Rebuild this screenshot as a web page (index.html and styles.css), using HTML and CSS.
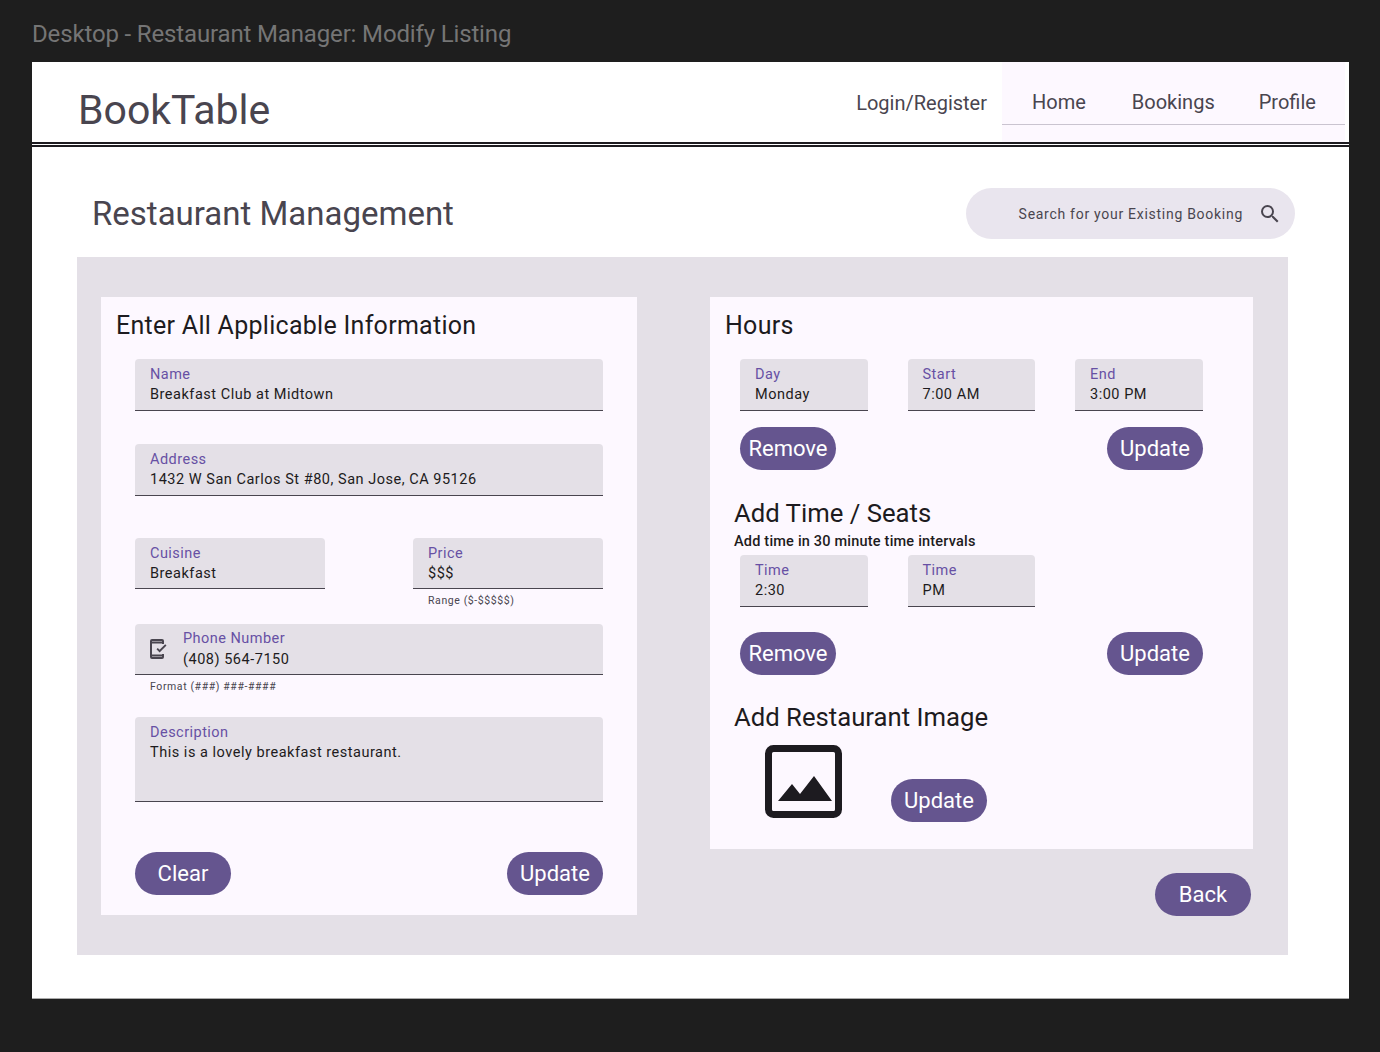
FILE: index.html
```html
<!DOCTYPE html>
<html lang="en">
<head>
    <meta charset="UTF-8">
    <meta name="viewport" content="width=device-width, initial-scale=1.0">
    <title>Restaurant Manager: Modify Listing</title>
    <link rel="stylesheet" href="styles.css">
</head>
<body>
    <div class="frame-label">Desktop - Restaurant Manager: Modify Listing</div>
    <div class="frame">
        <header class="topbar">
            <div class="brand">BookTable</div>
            <a class="login">Login/Register</a>
            <nav class="tabs">
                <div class="tab-row">
                    <a>Home</a>
                    <a>Bookings</a>
                    <a>Profile</a>
                </div>
            </nav>
        </header>

        <main class="content">
            <div class="title-row">
                <h1>Restaurant Management</h1>
                <div class="search">
                    <span>Search for your Existing Booking</span>
                    <svg width="24" height="24" viewBox="0 0 24 24"><path fill="#49454f" d="M15.5 14h-.79l-.28-.27A6.47 6.47 0 0 0 16 9.5 6.5 6.5 0 1 0 9.5 16c1.61 0 3.09-.59 4.23-1.57l.27.28v.79l5 4.99L20.49 19l-4.99-5zm-6 0C7.01 14 5 11.99 5 9.5S7.01 5 9.5 5 14 7.01 14 9.5 11.99 14 9.5 14z"/></svg>
                </div>
            </div>

            <section class="panel">
                <form class="card card-left">
                    <h2>Enter All Applicable Information</h2>
                    <div class="field field-name">
                        <label>Name</label>
                        <div class="value">Breakfast Club at Midtown</div>
                    </div>
                    <div class="field field-address">
                        <label>Address</label>
                        <div class="value">1432 W San Carlos St #80, San Jose, CA 95126</div>
                    </div>
                    <div class="pair">
                        <div class="field field-half field-short">
                            <label>Cuisine</label>
                            <div class="value">Breakfast</div>
                        </div>
                        <div class="field-half">
                            <div class="field field-short">
                                <label>Price</label>
                                <div class="value">$$$</div>
                            </div>
                            <div class="helper">Range ($-$$$$$)</div>
                        </div>
                    </div>
                    <div class="field field-short field-icon">
                        <svg width="24" height="24" viewBox="0 0 24 24"><path fill="#49454f" d="M5 2h10a2 2 0 0 1 2 2v3h-2V6.500H5v11h10V17h2v3a2 2 0 0 1-2 2H5a2 2 0 0 1-2-2V4a2 2 0 0 1 2-2zm0 2v.5h10V4zm0 15.500v.5h10v-.5z"/><path fill="#49454f" d="M12.600 15.400l-3.100-3.100 1.300-1.300 1.800 1.800 5.600-5.600 1.300 1.300z"/></svg>
                        <div>
                            <label>Phone Number</label>
                            <div class="value">(408) 564-7150</div>
                        </div>
                    </div>
                    <div class="helper">Format (###) ###-####</div>
                    <div class="field field-desc">
                        <label>Description</label>
                        <div class="value">This is a lovely breakfast restaurant.</div>
                    </div>
                    <div class="actions actions-form">
                        <button type="button">Clear</button>
                        <button type="button">Update</button>
                    </div>
                </form>

                <div class="side">
                    <div class="card card-right">
                        <h2>Hours</h2>
                        <div class="hours-row">
                            <div class="field"><label>Day</label><div class="value">Monday</div></div>
                            <div class="field"><label>Start</label><div class="value">7:00 AM</div></div>
                            <div class="field"><label>End</label><div class="value">3:00 PM</div></div>
                        </div>
                        <div class="actions actions-hours">
                            <button type="button">Remove</button>
                            <button type="button">Update</button>
                        </div>

                        <h3 class="add-time">Add Time / Seats</h3>
                        <p class="note">Add time in 30 minute time intervals</p>
                        <div class="hours-row">
                            <div class="field"><label>Time</label><div class="value">2:30</div></div>
                            <div class="field"><label>Time</label><div class="value">PM</div></div>
                        </div>
                        <div class="actions actions-seats">
                            <button type="button">Remove</button>
                            <button type="button">Update</button>
                        </div>

                        <h3 class="add-image">Add Restaurant Image</h3>
                        <div class="image-row">
                            <svg class="image-icon" width="77" height="73" viewBox="0 0 77 73">
                                <rect x="3.500" y="3.500" width="70" height="66" rx="5" fill="none" stroke="#1d1b20" stroke-width="7"/>
                                <path fill="#1d1b20" d="M13 56l14-17 8 10 14-18 18 25z"/>
                            </svg>
                            <button type="button">Update</button>
                        </div>
                    </div>
                    <button type="button" class="back">Back</button>
                </div>
            </section>
        </main>
    </div>
</body>
</html>
```
FILE: styles.css
```css
* {
    box-sizing: border-box;
}

body {
    margin: 0;
    background-color: #1e1e1e;
    font-family: 'Roboto', 'Liberation Sans', sans-serif;
    color: #1d1b20;
    height: 1052px;
    overflow: hidden;
}

h1, h2, h3, p {
    margin: 0;
    font-weight: 400;
}

.frame-label {
    height: 62px;
    padding: 20px 0 0 32px;
    font-size: 24px;
    line-height: 28px;
    letter-spacing: -0.15px;
    color: #757575;
}

.frame {
    width: 1317px;
    height: 937px;
    margin-left: 32px;
    background-color: #fff;
    border-bottom: 1px solid #aaa;
}

.topbar {
    display: flex;
    height: 85px;
    border-bottom: 5px double #1d1b20;
}

.brand {
    margin: 22px 0 0 46px;
    font-size: 41px;
    line-height: 52px;
    color: #49454f;
    flex: 1;
}

.login {
    margin-top: 28px;
    margin-right: 15px;
    font-size: 20px;
    line-height: 26px;
    color: #49454f;
}

.tabs {
    width: 343px;
    margin-right: 4px;
    background-color: #fdf8ff;
}

.tab-row {
    display: flex;
    height: 63px;
    padding: 27px 0 0 30px;
    border-bottom: 1px solid #cac4d0;
    font-size: 20px;
    line-height: 26px;
    color: #49454f;
}

.tab-row a:nth-child(2) {
    margin-left: 46px;
}

.tab-row a:nth-child(3) {
    margin-left: 44px;
}

.title-row {
    display: flex;
    justify-content: space-between;
    align-items: center;
    height: 51px;
    margin-top: 41px;
    padding: 0 54px 0 60px;
}

h1 {
    font-size: 33px;
    color: #49454f;
}

.search {
    display: flex;
    align-items: center;
    justify-content: flex-end;
    gap: 15px;
    width: 329px;
    height: 51px;
    padding-right: 13px;
    border-radius: 26px;
    background-color: #e9e5ee;
    font-size: 14px;
    letter-spacing: 0.72px;
    color: #49454f;
}

.panel {
    display: flex;
    align-items: flex-start;
    width: 1211px;
    height: 698px;
    margin: 18px 0 0 45px;
    padding: 40px 0 0 24px;
    background-color: #e4e0e7;
}

.card {
    background-color: #fdf8ff;
}

.card-left {
    width: 536px;
    height: 618px;
    padding: 15px 34px 0 34px;
}

.card h2 {
    font-size: 25px;
    line-height: 28px;
    letter-spacing: 0.28px;
    color: #1d1b20;
}

.card-left h2 {
    margin-left: -19px;
}

.field {
    height: 52px;
    padding: 7px 15px 0;
    border-radius: 4px 4px 0 0;
    background-color: #e4e0e7;
    border-bottom: 1px solid #49454f;
}

.field-short {
    height: 51px;
}

.field label {
    display: block;
    font-size: 14.500px;
    line-height: 18px;
    letter-spacing: 0.47px;
    color: #6750a4;
}

.value {
    font-size: 14.500px;
    line-height: 22px;
    letter-spacing: 0.52px;
    color: #1d1b20;
}

.field-name {
    margin-top: 19px;
}

.field-address {
    margin-top: 33px;
}

.pair {
    display: flex;
    justify-content: space-between;
    margin-top: 42px;
    height: 86px;
}

.field-half {
    width: 190px;
}

.helper {
    padding: 5px 15px 0;
    font-size: 10.500px;
    line-height: 14px;
    letter-spacing: 0.6px;
    color: #49454f;
}

.field-icon {
    display: flex;
    gap: 12px;
    padding-left: 12px;
    padding-top: 6px;
}

.field-icon svg {
    margin-top: 7px;
}

.field-icon .value {
    line-height: 24px;
}

.field-desc {
    height: 85px;
    margin-top: 23px;
}

.actions {
    display: flex;
    justify-content: space-between;
}

.actions-form {
    margin-top: 50px;
}

button {
    width: 96px;
    height: 43px;
    padding: 0;
    border: none;
    border-radius: 22px;
    background-color: #65558f;
    color: #fff;
    font-family: inherit;
    font-size: 22px;
    cursor: pointer;
}

.side {
    width: 543px;
    margin-left: 73px;
}

.card-right {
    height: 552px;
    padding: 15px 50px 0 15px;
}

.hours-row {
    display: flex;
    gap: 40px;
    margin: 19px 0 0 15px;
}

.hours-row .field {
    width: 127.500px;
}

.actions-hours {
    margin: 16px 0 0 15px;
}

h3 {
    font-size: 25.700px;
    line-height: 30px;
    color: #1d1b20;
    margin-left: 9px;
}

.add-time {
    margin-top: 28px;
}

.note {
    margin: 4px 0 0 9px;
    font-size: 14.500px;
    line-height: 20px;
    letter-spacing: 0.2px;
    font-weight: 500;
}

.card-right .note + .hours-row {
    margin-top: 3px;
}

.actions-seats {
    margin: 25px 0 0 15px;
}

.add-image {
    margin-top: 27px;
}

.image-row {
    display: flex;
    align-items: flex-end;
    margin: 13px 0 0 40px;
}

.image-icon {
    margin-bottom: 4px;
}

.image-row button {
    margin-left: 49px;
}

.back {
    display: block;
    margin: 24px 0 0 445px;
}
```
